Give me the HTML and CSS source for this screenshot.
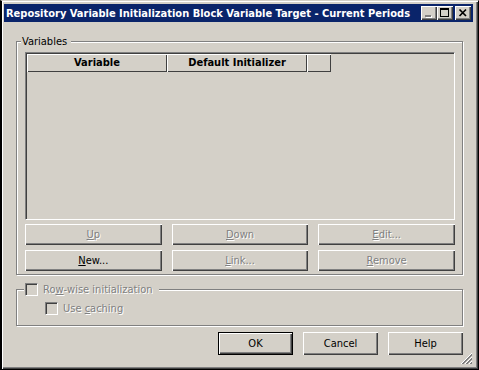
FILE: index.html
```html
<!DOCTYPE html>
<html lang="en">
<head>
    <meta charset="UTF-8">
    <title>Repository Variable Initialization Block Variable Target - Current Periods</title>
    <link rel="stylesheet" href="styles.css">
</head>
<body>
    <div class="window">
        <div class="titlebar">
            <span class="title">Repository Variable Initialization Block Variable Target - Current Periods</span>
            <div class="caption-buttons">
                <span class="cap-btn">
                    <svg width="16" height="14" viewBox="0 0 16 14" shape-rendering="crispEdges">
                        <rect x="5" y="10" width="6" height="2" fill="#fff"/>
                        <rect x="4" y="9" width="6" height="2" fill="#808080"/>
                    </svg>
                </span>
                <span class="cap-btn">
                    <svg width="16" height="14" viewBox="0 0 16 14" shape-rendering="crispEdges">
                        <rect x="3" y="2" width="9" height="2" fill="#000"/>
                        <rect x="3" y="2" width="1" height="9" fill="#000"/>
                        <rect x="11" y="2" width="1" height="9" fill="#000"/>
                        <rect x="3" y="10" width="9" height="1" fill="#000"/>
                    </svg>
                </span>
                <span class="cap-btn close">
                    <svg width="16" height="14" viewBox="0 0 16 14">
                        <path d="M4.5 3.5 L11 10 M11 3.5 L4.5 10" stroke="#000" stroke-width="1.7"/>
                    </svg>
                </span>
            </div>
        </div>

        <div class="client">
            <fieldset class="group variables">
                <legend>Variables</legend>
                <div class="listview">
                    <div class="lv-header">
                        <div class="lv-col col-name">Variable</div>
                        <div class="lv-col col-init">Default Initializer</div>
                        <div class="lv-col col-extra"></div>
                    </div>
                </div>
                <div class="btn-grid">
                    <button class="btn" disabled><u>U</u>p</button>
                    <button class="btn" disabled><u>D</u>own</button>
                    <button class="btn" disabled><u>E</u>dit...</button>
                    <button class="btn"><u>N</u>ew...</button>
                    <button class="btn" disabled><u>L</u>ink...</button>
                    <button class="btn" disabled><u>R</u>emove</button>
                </div>
            </fieldset>

            <fieldset class="group rowwise">
                <legend>
                    <label class="check disabled"><span class="box"></span><span>Ro<u>w</u>-wise initialization</span></label>
                </legend>
                <label class="check disabled caching"><span class="box"></span><span>Use <u>c</u>aching</span></label>
            </fieldset>

            <div class="dialog-buttons">
                <button class="btn wide default">OK</button>
                <button class="btn wide">Cancel</button>
                <button class="btn wide">Help</button>
            </div>
        </div>

        <svg class="grip" width="12" height="12" viewBox="0 0 12 12" shape-rendering="crispEdges">
            <path d="M11 0 L0 11 M11 4 L4 11 M11 8 L8 11" stroke="#fff" stroke-width="1"/>
            <path d="M11 1 L1 11 M11 2 L2 11 M11 5 L5 11 M11 6 L6 11 M11 9 L9 11 M11 10 L10 11" stroke="#808080" stroke-width="1"/>
        </svg>
    </div>
</body>
</html>
```

FILE: styles.css
```css
* {
    margin: 0;
    padding: 0;
    box-sizing: border-box;
}

body {
    background: #000;
    font-family: "DejaVu Sans Condensed", "DejaVu Sans", sans-serif;
    font-stretch: condensed;
    font-size: 11px;
    line-height: 13px;
    color: #000;
}

.window {
    position: relative;
    width: 479px;
    height: 370px;
    background: #d4d0c8;
    border-style: solid;
    border-width: 1px 1px 1px 2px;
    border-color: #d4d0c8 #000 #000 #000;
    box-shadow: inset 1px 1px 0 #fff, inset -1px -1px 0 #404040, inset -2px -2px 0 #808080;
    padding: 3px 5px 4px 2px;
}

/* title bar */
.titlebar {
    height: 18px;
    background: #0a246a;
    display: flex;
    align-items: center;
    justify-content: space-between;
    padding: 0 2px 0 2px;
}

.title {
    color: #fff;
    font-weight: bold;
    white-space: nowrap;
}

.caption-buttons {
    display: flex;
}

.cap-btn {
    display: block;
    width: 16px;
    height: 14px;
    background: #d4d0c8;
    box-shadow: inset 1px 1px 0 #fff, inset -1px -1px 0 #404040, inset -2px -2px 0 #808080;
}

.cap-btn svg {
    display: block;
}

.cap-btn.close {
    margin-left: 2px;
}

/* dialog body */
.client {
    padding: 0 10px 0 12px;
}

.group {
    border: 1px solid #808080;
    box-shadow: 1px 1px 0 #fff, inset 1px 1px 0 #fff;
    min-width: 0;
}

.group legend {
    background: #d4d0c8;
}

.variables {
    margin-top: 13px;
    padding: 4px 7px 3px 8px;
}

.variables legend {
    margin-left: -4px;
    padding: 0 4px 0 1px;
}

.listview {
    height: 168px;
    background: #d4d0c8;
    border: 1px solid;
    border-color: #808080 #fff #fff #808080;
    box-shadow: inset 1px 1px 0 #404040, inset -1px -1px 0 #d4d0c8;
    padding: 1px;
}

.lv-header {
    display: flex;
    height: 18px;
}

.lv-col {
    background: #d4d0c8;
    font-weight: bold;
    text-align: center;
    line-height: 17px;
    box-shadow: inset 1px 1px 0 #fff, inset -1px -1px 0 #404040;
}

.col-name,
.col-init {
    width: 140px;
}

.col-extra {
    width: 24px;
}

.btn-grid {
    display: grid;
    grid-template-columns: repeat(3, 1fr);
    gap: 5px 10px;
    margin-top: 4px;
}

.btn {
    font: inherit;
    height: 21px;
    background: #d4d0c8;
    color: #000;
    border: none;
    box-shadow: inset 1px 1px 0 #fff, inset -1px -1px 0 #404040, inset -2px -2px 0 #808080;
    text-align: center;
}

.btn u {
    text-underline-offset: 1px;
}

.btn:disabled,
.check.disabled {
    color: #808080;
    text-shadow: 1px 1px 0 #fff;
}

.rowwise {
    margin-top: 8px;
    padding: 6px 8px 10px 8px;
}

.rowwise legend {
    margin-left: -1px;
    padding: 0 6px 0 1px;
}

.check {
    display: flex;
    align-items: center;
    gap: 5px;
    height: 13px;
    white-space: nowrap;
}

.check .box {
    flex: none;
    width: 13px;
    height: 13px;
    border: 1px solid;
    border-color: #808080 #fff #fff #808080;
    box-shadow: inset 1px 1px 0 #404040, inset -1px -1px 0 #d4d0c8;
    background: #d4d0c8;
}

.caching {
    margin-left: 20px;
}

.dialog-buttons {
    display: flex;
    justify-content: flex-end;
    gap: 10px;
    margin-top: 6px;
}

.btn.wide {
    width: 75px;
    height: 23px;
}

.btn.default {
    border: 1px solid #000;
}

.grip {
    position: absolute;
    right: 5px;
    bottom: 4px;
}
```
